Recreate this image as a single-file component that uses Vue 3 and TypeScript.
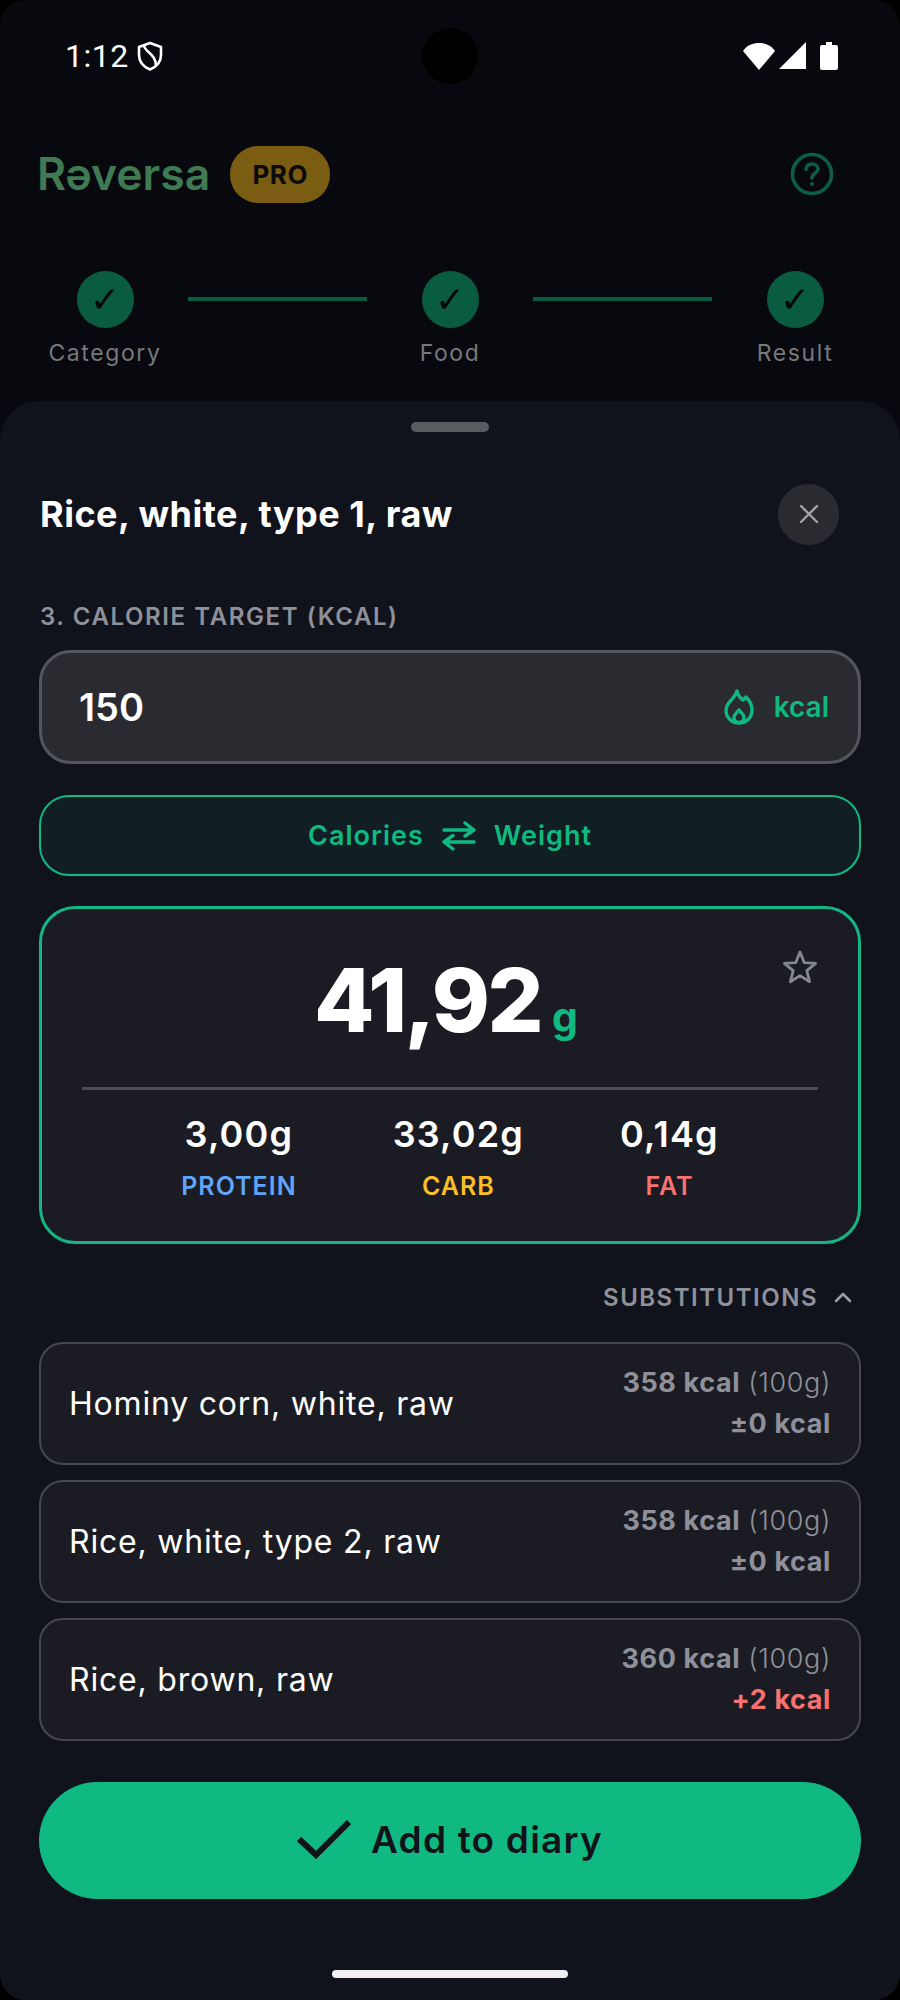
<script setup lang="ts">
interface Step { label: string }
interface Macro { value: string; label: string; cls: string }
interface Sub { name: string; kcal: string; diff: string; up: boolean }
const steps: Step[] = [{ label: 'Category' }, { label: 'Food' }, { label: 'Result' }]
const macros: Macro[] = [
  { value: '3,00g', label: 'PROTEIN', cls: 'protein' },
  { value: '33,02g', label: 'CARB', cls: 'carb' },
  { value: '0,14g', label: 'FAT', cls: 'fat' },
]
const subs: Sub[] = [
  { name: 'Hominy corn, white, raw', kcal: '358 kcal', diff: '±0 kcal', up: false },
  { name: 'Rice, white, type 2, raw', kcal: '358 kcal', diff: '±0 kcal', up: false },
  { name: 'Rice, brown, raw', kcal: '360 kcal', diff: '+2 kcal', up: true },
]
</script>

<template>
  <div class="screen">
    <div class="camera"></div>
    <div class="status">
      <div class="status-left">
        <span class="time">1:12</span>
        <svg class="shield" viewBox="0 0 26 30" width="26" height="30" fill="none" stroke="#fff" stroke-width="2.6" stroke-linejoin="round">
          <path d="M13 2 L24 6 V14 C24 21 19 26 13 28.5 C7 26 2 21 2 14 V6 Z" />
          <path d="M7 5 C9 12 19 13 19 25" />
        </svg>
      </div>
      <div class="status-right">
        <svg viewBox="0 0 32 28" width="32" height="28" fill="#fff"><path d="M0 9 C4 3 10 1 16 1 C22 1 28 3 32 9 L16 28 Z" /></svg>
        <svg viewBox="0 0 28 28" width="28" height="28" fill="#fff"><path d="M0 27 L27 0 V27 Z" /></svg>
        <svg class="batt" viewBox="0 0 18 28" width="18" height="28" fill="#fff"><path d="M6 0 H12 V3 H16 Q18 3 18 5 V26 Q18 28 16 28 H2 Q0 28 0 26 V5 Q0 3 2 3 H6 Z" /></svg>
      </div>
    </div>

    <header class="app-head">
      <div class="brand">
        <span class="logo">Rəversa</span>
        <span class="pro">PRO</span>
      </div>
      <svg class="help" viewBox="0 0 44 44" width="44" height="44" fill="none" stroke="#0b5e45" stroke-width="3.6">
        <circle cx="22" cy="22" r="19.5" />
        <path d="M16 17.5 C16 14 18.5 12 22 12 C25.5 12 28 14 28 17 C28 21 22 21.5 22 26" stroke-linecap="round" />
        <circle cx="22" cy="32" r="2" fill="#0b5e45" stroke="none" />
      </svg>
    </header>

    <div class="stepper">
      <template v-for="(s, i) in steps" :key="s.label">
        <div class="step">
          <div class="dot">✓</div>
          <span class="step-label">{{ s.label }}</span>
        </div>
        <div v-if="i < steps.length - 1" class="line"></div>
      </template>
    </div>

    <section class="sheet">
      <div class="handle"></div>
      <div class="title-row">
        <h1 class="title">Rice, white, type 1, raw</h1>
        <div class="close">
          <svg viewBox="0 0 20 20" width="20" height="20" fill="none" stroke="#a2a4aa" stroke-width="2.4" stroke-linecap="round"><path d="M2 2 L18 18 M18 2 L2 18" /></svg>
        </div>
      </div>
      <div class="field-label">3. CALORIE TARGET (KCAL)</div>
      <div class="input">
        <span class="input-val">150</span>
        <div class="input-unit">
          <svg viewBox="0 0 30 36" width="30" height="36" fill="none" stroke="#10b981" stroke-width="3.4" stroke-linejoin="round" stroke-linecap="round">
            <path d="M13 2 C14 6 16 9 19 11 L22 8 C26 12 28 16 28 21 C28 29 22 34 15 34 C8 34 2 29 2 21 C2 13 11 10 13 2 Z" />
            <path d="M15 21 C17 24 20 25 20 28.5 C20 31.5 18 33.5 15 33.5 C12 33.5 10 31.5 10 28.5 C10 25 13 24 15 21 Z" />
          </svg>
          <span class="kcal">kcal</span>
        </div>
      </div>
      <div class="toggle">
        <span>Calories</span>
        <svg viewBox="0 0 34 30" width="34" height="30" fill="none" stroke="#10b981" stroke-width="3.4" stroke-linecap="round" stroke-linejoin="round">
          <path d="M2 9 H31 M23 2 L32 9 L23 15" />
          <path d="M32 21 H3 M11 14.5 L2 21 L11 28" />
        </svg>
        <span>Weight</span>
      </div>

      <div class="result">
        <svg class="star" viewBox="0 0 36 36" width="36" height="36" fill="none" stroke="#85878f" stroke-width="2.8" stroke-linejoin="round">
          <path d="M18 3 L22.2 13.6 L33.6 14.3 L24.8 21.6 L27.6 32.7 L18 26.6 L8.4 32.7 L11.2 21.6 L2.4 14.3 L13.8 13.6 Z" />
        </svg>
        <div class="big">
          <span class="big-num">41,92</span>
          <span class="big-unit">g</span>
        </div>
        <div class="divider"></div>
        <div class="macros">
          <div v-for="m in macros" :key="m.label" class="macro">
            <span class="macro-val">{{ m.value }}</span>
            <span class="macro-label" :class="m.cls">{{ m.label }}</span>
          </div>
        </div>
      </div>

      <div class="subs-head">
        <span>SUBSTITUTIONS</span>
        <svg viewBox="0 0 18 12" width="18" height="12" fill="none" stroke="#9a9ca5" stroke-width="2.6" stroke-linecap="round" stroke-linejoin="round"><path d="M2 10 L9 3 L16 10" /></svg>
      </div>

      <div class="subs">
        <div v-for="s in subs" :key="s.name" class="sub">
          <span class="sub-name">{{ s.name }}</span>
          <div class="sub-info">
            <span class="sub-kcal"><b>{{ s.kcal }}</b> <i>(100g)</i></span>
            <span class="sub-diff" :class="{ up: s.up }">{{ s.diff }}</span>
          </div>
        </div>
      </div>

      <button class="add">
        <svg viewBox="0 0 54 40" width="54" height="40" fill="none" stroke="#10131a" stroke-width="6"><path d="M2 20 L19 36 L52 3" /></svg>
        <span>Add to diary</span>
      </button>
      <div class="home"></div>
    </section>
  </div>
</template>

<style>
html, body { margin: 0; background: #000; }
</style>

<style scoped>
.screen {
  position: relative;
  width: 900px;
  height: 2000px;
  box-sizing: border-box;
  display: flex;
  flex-direction: column;
  background: #08090e;
  border-radius: 26px;
  overflow: hidden;
  font-family: Inter, "Liberation Sans", sans-serif;
}
.camera {
  position: absolute;
  left: 422px;
  top: 28px;
  width: 56px;
  height: 56px;
  border-radius: 50%;
  background: #000;
}
.status {
  height: 56px;
  margin-top: 28px;
  padding: 0 62px 0 65px;
  display: flex;
  align-items: center;
  justify-content: space-between;
}
.status-left { display: flex; align-items: center; gap: 8px; }
.time {
  font-family: Roboto, sans-serif;
  color: #fff;
  font-size: 32px;
  letter-spacing: 0.5px;
}
.status-right { display: flex; align-items: center; gap: 4px; }
.batt { margin-left: 9px; }
.app-head {
  margin-top: 61px;
  height: 58px;
  padding: 0 66px 0 37px;
  display: flex;
  align-items: center;
  justify-content: space-between;
}
.brand { display: flex; align-items: center; gap: 20px; }
.logo {
  color: #3f7a52;
  font-size: 44.5px;
  font-weight: 600;
}
.pro {
  width: 100px;
  height: 57px;
  border-radius: 28px;
  background: #7a5c12;
  color: #0b0b0c;
  font-size: 26px;
  font-weight: 700;
  display: flex;
  align-items: center;
  justify-content: center;
  letter-spacing: 0.5px;
}
.stepper {
  margin-top: 68px;
  padding: 0 48px;
  display: flex;
  align-items: flex-start;
  justify-content: space-between;
}
.step {
  width: 114px;
  display: flex;
  flex-direction: column;
  align-items: center;
  gap: 11px;
}
.dot {
  width: 57px;
  height: 57px;
  border-radius: 50%;
  background: #0a5c40;
  color: #050608;
  font-family: "DejaVu Sans", sans-serif;
  font-size: 36px;
  display: flex;
  align-items: center;
  justify-content: center;
}
.step-label {
  color: #77787c;
  font-size: 23px;
  line-height: 28px;
  letter-spacing: 1.6px;
  white-space: nowrap;
}
.line {
  width: 179px;
  height: 4px;
  margin-top: 26px;
  background: #0a5c40;
}
.sheet {
  margin-top: 34px;
  flex: 1;
  padding: 0 39px;
  display: flex;
  flex-direction: column;
  background: #11131c;
  border-radius: 40px 40px 0 0;
}
.handle {
  align-self: center;
  width: 78px;
  height: 10px;
  margin-top: 21px;
  border-radius: 5px;
  background: #5a5c62;
}
.title-row {
  margin-top: 52px;
  height: 60px;
  padding: 0 22px 0 1px;
  display: flex;
  align-items: center;
  justify-content: space-between;
}
.title {
  margin: 0;
  color: #fff;
  font-size: 36px;
  font-weight: 700;
  letter-spacing: 0.5px;
}
.close {
  width: 61px;
  height: 61px;
  border-radius: 50%;
  background: #2a2b30;
  display: flex;
  align-items: center;
  justify-content: center;
}
.field-label {
  margin-top: 58px;
  padding-left: 1px;
  color: #8f919a;
  font-size: 24px;
  font-weight: 600;
  line-height: 30px;
  letter-spacing: 1.6px;
}
.input {
  margin-top: 18px;
  height: 114px;
  box-sizing: border-box;
  padding: 0 29px 0 37px;
  border: 3px solid #55565c;
  border-radius: 32px;
  background: #2a2b30;
  display: flex;
  align-items: center;
  justify-content: space-between;
}
.input-val {
  color: #fff;
  font-size: 38px;
  font-weight: 600;
}
.input-unit { display: flex; align-items: center; gap: 20px; }
.kcal {
  color: #10b981;
  font-size: 28px;
  font-weight: 600;
}
.toggle {
  margin-top: 31px;
  height: 81px;
  box-sizing: border-box;
  border: 2px solid #10b981;
  border-radius: 30px;
  background: #111e24;
  color: #10b981;
  font-size: 27px;
  font-weight: 600;
  letter-spacing: 1px;
  display: flex;
  align-items: center;
  justify-content: center;
  gap: 18px;
}
.result {
  position: relative;
  margin-top: 30px;
  height: 338px;
  box-sizing: border-box;
  padding: 0 40px;
  border: 3px solid #14b684;
  border-radius: 36px;
  background: #1b1c23;
}
.star {
  position: absolute;
  top: 40px;
  right: 40px;
}
.big {
  height: 178px;
  display: flex;
  align-items: baseline;
  justify-content: center;
  gap: 11px;
  padding: 38px 8px 0 0;
  box-sizing: border-box;
}
.big-num {
  color: #fff;
  font-size: 88px;
  font-weight: 800;
  line-height: 106px;
  letter-spacing: -2.5px;
}
.big-unit {
  color: #10b981;
  font-size: 41px;
  font-weight: 700;
}
.divider { height: 3px; background: #4d4e54; }
.macros {
  margin-top: 24px;
  display: flex;
  justify-content: center;
  gap: 96px;
}
.macro {
  display: flex;
  flex-direction: column;
  align-items: center;
  gap: 17px;
}
.macro-val {
  color: #fff;
  font-size: 36px;
  font-weight: 600;
  line-height: 40px;
  letter-spacing: 1.2px;
}
.macro-label {
  font-size: 25px;
  font-weight: 600;
  line-height: 30px;
  letter-spacing: 1px;
}
.protein { color: #60a5fa; }
.carb { color: #fbbf24; }
.fat { color: #f87171; }
.subs-head {
  margin-top: 37px;
  padding-right: 9px;
  height: 32px;
  display: flex;
  align-items: center;
  justify-content: flex-end;
  gap: 16px;
  color: #8f919a;
  font-size: 24px;
  font-weight: 600;
  letter-spacing: 1.5px;
}
.subs {
  margin-top: 29px;
  display: flex;
  flex-direction: column;
  gap: 15px;
}
.sub {
  height: 123px;
  box-sizing: border-box;
  padding: 0 28px;
  border: 2px solid #47484e;
  border-radius: 24px;
  background: #1b1c23;
  display: flex;
  align-items: center;
  justify-content: space-between;
}
.sub-name {
  color: #fff;
  font-size: 32px;
  letter-spacing: 0.8px;
}
.sub-info {
  display: flex;
  flex-direction: column;
  align-items: flex-end;
  gap: 11px;
  font-size: 27px;
  line-height: 30px;
  letter-spacing: 0.6px;
}
.sub-kcal { color: #8f919a; }
.sub-kcal b { font-weight: 700; }
.sub-kcal i { font-style: normal; font-weight: 300; }
.sub-diff { color: #8f919a; font-weight: 700; }
.sub-diff.up { color: #f87171; }
.add {
  margin-top: 41px;
  height: 117px;
  border: none;
  border-radius: 59px;
  background: #10b981;
  color: #10131a;
  font-family: inherit;
  font-size: 37px;
  font-weight: 600;
  letter-spacing: 1.2px;
  display: flex;
  align-items: center;
  justify-content: center;
  gap: 20px;
  padding: 0 0 3px;
}
.home {
  align-self: center;
  width: 236px;
  height: 8px;
  margin-top: 71px;
  border-radius: 4px;
  background: #f0f0f2;
}
</style>
